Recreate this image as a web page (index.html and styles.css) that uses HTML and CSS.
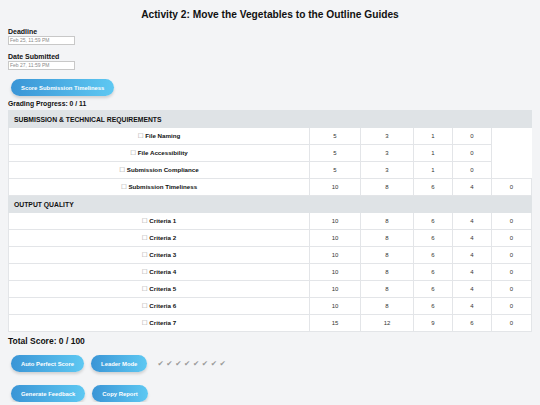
FILE: index.html
```html
<!DOCTYPE html>
<html>
<head>
<meta charset="utf-8">
<link rel="stylesheet" href="styles.css">
</head>
<body>
<h1 class="title">Activity 2: Move the Vegetables to the Outline Guides</h1>
<div class="field first">
  <label class="field-label">Deadline</label>
  <div class="date-input">Feb 25, 11:59 PM</div>
</div>
<div class="field">
  <label class="field-label">Date Submitted</label>
  <div class="date-input">Feb 27, 11:59 PM</div>
</div>
<div class="btn-row first">
  <button class="btn">Score Submission Timeliness</button>
</div>
<div class="progress">Grading Progress: 0 / 11</div>
<table class="rubric">
  <colgroup>
    <col class="c-name"><col class="c-a"><col class="c-b"><col class="c-c"><col class="c-d"><col class="c-e">
  </colgroup>
  <tr class="section"><td colspan="6">SUBMISSION &amp; TECHNICAL REQUIREMENTS</td></tr>
  <tr><td class="crit"><span class="box">☐</span> File Naming</td><td>5</td><td>3</td><td>1</td><td>0</td></tr>
  <tr><td class="crit"><span class="box">☐</span> File Accessibility</td><td>5</td><td>3</td><td>1</td><td>0</td></tr>
  <tr><td class="crit"><span class="box">☐</span> Submission Compliance</td><td>5</td><td>3</td><td>1</td><td>0</td></tr>
  <tr><td class="crit"><span class="box">☐</span> Submission Timeliness</td><td>10</td><td>8</td><td>6</td><td>4</td><td>0</td></tr>
  <tr class="section"><td colspan="6">OUTPUT QUALITY</td></tr>
  <tr><td class="crit"><span class="box">☐</span> Criteria 1</td><td>10</td><td>8</td><td>6</td><td>4</td><td>0</td></tr>
  <tr><td class="crit"><span class="box">☐</span> Criteria 2</td><td>10</td><td>8</td><td>6</td><td>4</td><td>0</td></tr>
  <tr><td class="crit"><span class="box">☐</span> Criteria 3</td><td>10</td><td>8</td><td>6</td><td>4</td><td>0</td></tr>
  <tr><td class="crit"><span class="box">☐</span> Criteria 4</td><td>10</td><td>8</td><td>6</td><td>4</td><td>0</td></tr>
  <tr><td class="crit"><span class="box">☐</span> Criteria 5</td><td>10</td><td>8</td><td>6</td><td>4</td><td>0</td></tr>
  <tr><td class="crit"><span class="box">☐</span> Criteria 6</td><td>10</td><td>8</td><td>6</td><td>4</td><td>0</td></tr>
  <tr><td class="crit"><span class="box">☐</span> Criteria 7</td><td>15</td><td>12</td><td>9</td><td>6</td><td>0</td></tr>
</table>
<div class="total">Total Score: 0 / 100</div>
<div class="btn-row mid">
  <button class="btn">Auto Perfect Score</button>
  <button class="btn">Leader Mode</button>
  <span class="checks">✔✔✔✔✔✔✔✔</span>
</div>
<div class="btn-row">
  <button class="btn">Generate Feedback</button>
  <button class="btn">Copy Report</button>
</div>
</body>
</html>
```
FILE: styles.css
```css
html, body {
  margin: 0;
  padding: 0;
}
body {
  background: #f3f4f6;
  font-family: "Liberation Sans", Arial, sans-serif;
  color: #111;
  padding: 0 8px;
}
.title {
  margin: 0;
  padding-top: 8px;
  text-align: center;
  font-size: 10.2px;
  font-weight: bold;
  line-height: 14px;
}
.field {
  display: flex;
  flex-direction: column;
  align-items: flex-start;
  margin-top: 8px;
}
.field.first {
  margin-top: 6px;
}
.field-label {
  font-size: 7px;
  font-weight: bold;
  line-height: 8px;
}
.date-input {
  width: 64px;
  height: 7px;
  background: #fff;
  border: 1px solid #c8c8c8;
  font-size: 5px;
  line-height: 7px;
  color: #8a8a8a;
  padding: 0 0 0 1px;
}
.btn-row {
  display: flex;
  align-items: center;
  gap: 7px;
  padding-left: 3px;
  margin-top: 13px;
}
.btn-row.first {
  margin-top: 9px;
}
.btn-row.mid {
  margin-top: 9px;
}
.btn {
  height: 17px;
  border: none;
  border-radius: 9px;
  padding: 0 10px;
  background: linear-gradient(90deg, #3a95d6, #5ec8f2);
  color: #fff;
  font-family: "Liberation Sans", Arial, sans-serif;
  font-weight: bold;
  font-size: 5.9px;
  box-shadow: 0 2px 3px rgba(0,0,0,0.15);
}
.checks {
  color: #9a9a9a;
  font-family: "DejaVu Sans", sans-serif;
  font-size: 7.5px;
  letter-spacing: 2.6px;
  margin-left: 3px;
}
.progress {
  margin-top: 4px;
  font-size: 6.8px;
  font-weight: bold;
  line-height: 8px;
}
.rubric {
  width: 100%;
  margin-top: 2px;
  table-layout: fixed;
  border-collapse: collapse;
  background: #fff;
  font-size: 6px;
  color: #333;
}
.c-name { width: 301px; }
.c-a { width: 51px; }
.c-b { width: 53px; }
.c-c { width: 39px; }
.c-d { width: 39px; }
.c-e { width: 40px; }
.rubric td {
  height: 16px;
  padding: 0;
  border: 1px solid #e3e5e8;
  text-align: center;
}
.rubric td.crit {
  font-weight: bold;
  color: #111;
  font-size: 6.2px;
}
.box {
  font-family: "DejaVu Sans", sans-serif;
  font-weight: normal;
  color: #9a9a9a;
  font-size: 6.5px;
}
.rubric tr.section td {
  background: #dfe3e6;
  text-align: left;
  padding-left: 5px;
  font-weight: bold;
  color: #111;
  font-size: 6.8px;
  border-color: #dfe3e6;
}
.total {
  margin-top: 4px;
  font-size: 8.5px;
  font-weight: bold;
  line-height: 10px;
}
```
